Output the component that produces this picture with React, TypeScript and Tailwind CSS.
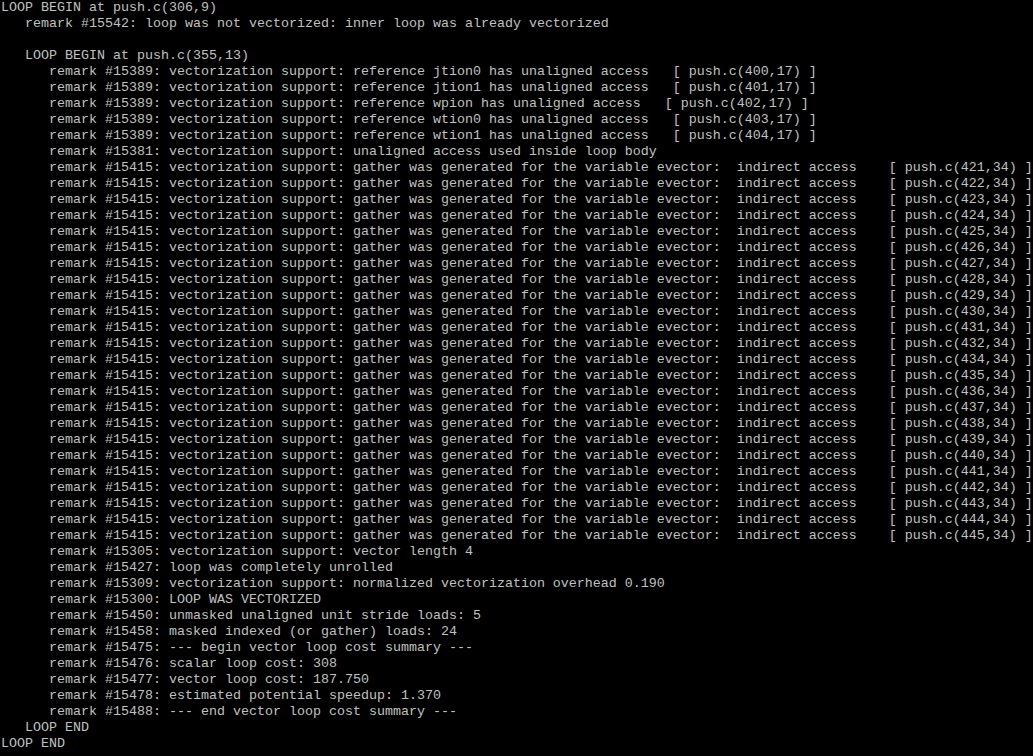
const gathers = [421, 422, 423, 424, 425, 426, 427, 428, 429, 430, 431, 432, 434, 435, 436, 437, 438, 439, 440, 441, 442, 443, 444, 445];

const LINES: string[] = [
  'LOOP BEGIN at push.c(306,9)',
  '   remark #15542: loop was not vectorized: inner loop was already vectorized',
  '',
  '   LOOP BEGIN at push.c(355,13)',
  '      remark #15389: vectorization support: reference jtion0 has unaligned access   [ push.c(400,17) ]',
  '      remark #15389: vectorization support: reference jtion1 has unaligned access   [ push.c(401,17) ]',
  '      remark #15389: vectorization support: reference wpion has unaligned access   [ push.c(402,17) ]',
  '      remark #15389: vectorization support: reference wtion0 has unaligned access   [ push.c(403,17) ]',
  '      remark #15389: vectorization support: reference wtion1 has unaligned access   [ push.c(404,17) ]',
  '      remark #15381: vectorization support: unaligned access used inside loop body',
  ...gathers.map(
    (n) =>
      `      remark #15415: vectorization support: gather was generated for the variable evector:  indirect access    [ push.c(${n},34) ]`
  ),
  '      remark #15305: vectorization support: vector length 4',
  '      remark #15427: loop was completely unrolled',
  '      remark #15309: vectorization support: normalized vectorization overhead 0.190',
  '      remark #15300: LOOP WAS VECTORIZED',
  '      remark #15450: unmasked unaligned unit stride loads: 5',
  '      remark #15458: masked indexed (or gather) loads: 24',
  '      remark #15475: --- begin vector loop cost summary ---',
  '      remark #15476: scalar loop cost: 308',
  '      remark #15477: vector loop cost: 187.750',
  '      remark #15478: estimated potential speedup: 1.370',
  '      remark #15488: --- end vector loop cost summary ---',
  '   LOOP END',
  'LOOP END',
];

export default function App() {
  return (
    <div className="w-[1033px] h-[756px] overflow-hidden bg-black pl-px">
      <pre className="m-0 font-['Liberation_Mono',monospace] text-[13.333px] leading-[16px] text-[#c0c0c0] whitespace-pre">
        {LINES.map((line, i) => (
          <div key={i} className="h-4">
            {line}
          </div>
        ))}
      </pre>
    </div>
  );
}
